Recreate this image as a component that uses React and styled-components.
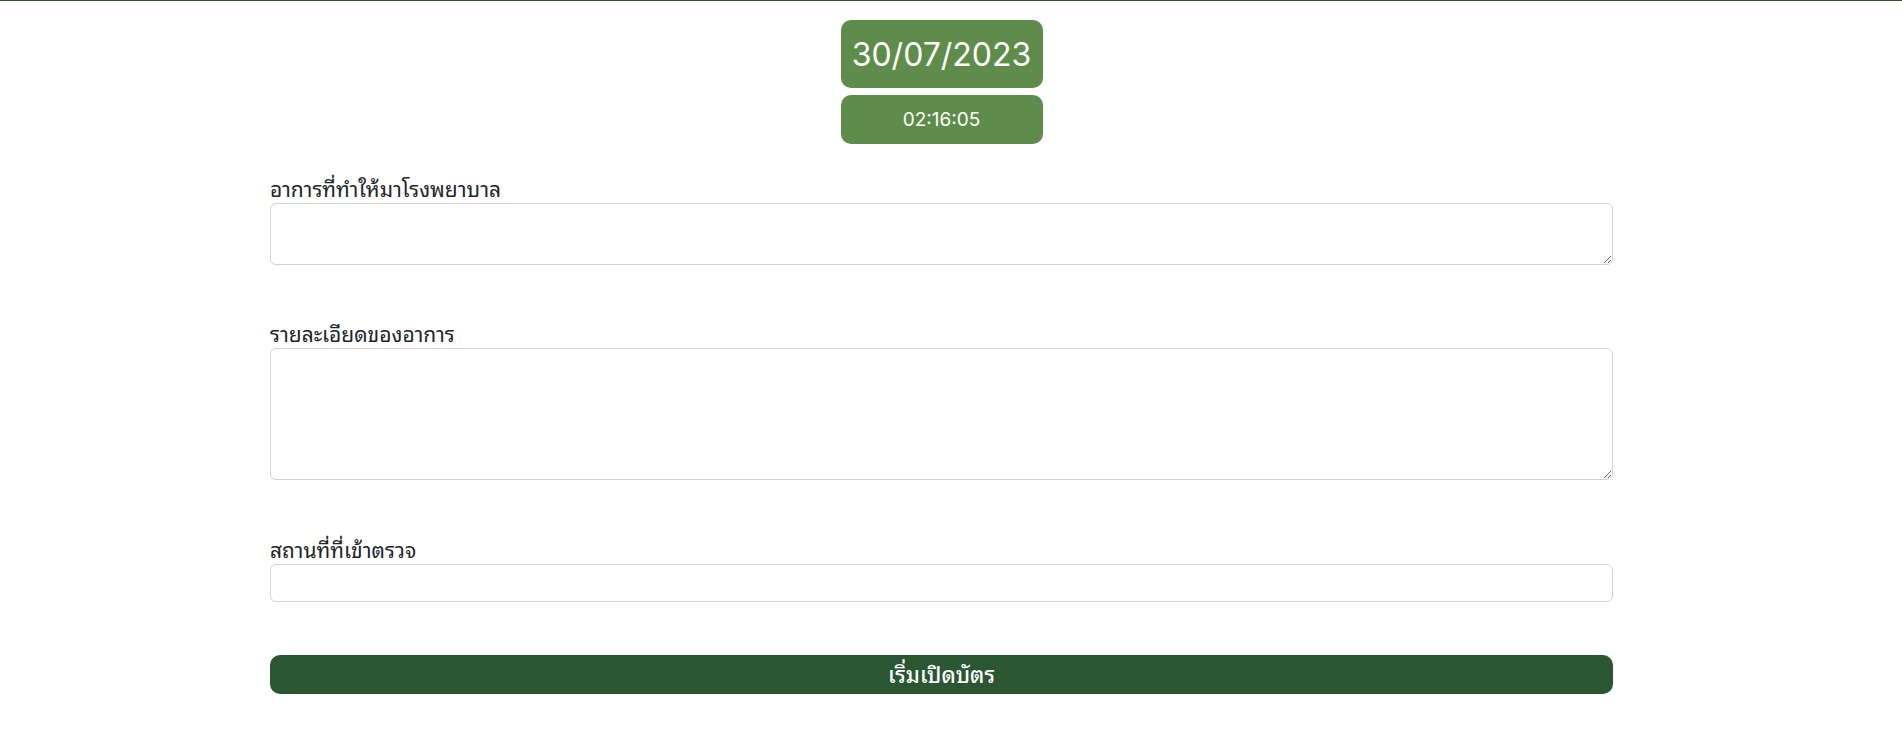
import React from 'react';
import styled, { createGlobalStyle } from 'styled-components';

const GlobalStyle = createGlobalStyle`
  html, body {
    margin: 0;
    padding: 0;
    background: #ffffff;
  }
  body {
    font-family: 'Noto Sans Thai Looped', 'Noto Sans Thai', 'Noto Sans', sans-serif;
    color: #212529;
  }
`;

const Page = styled.div`
  border-top: 1px solid #2a5632;
  min-height: 732px;
  box-sizing: border-box;
`;

const ClockArea = styled.div`
  display: flex;
  flex-direction: column;
  align-items: center;
  gap: 7px;
  padding: 19px 19px 0 0;
`;

const ClockBox = styled.div`
  width: 202px;
  height: ${({ big }) => (big ? '68px' : '49px')};
  background: #5e8c4b;
  border-radius: 10px;
  color: #ffffff;
  display: flex;
  align-items: center;
  justify-content: center;
  font-family: Inter, 'Noto Sans', sans-serif;
  font-size: ${({ big }) => (big ? '32px' : '19px')};
  font-weight: 400;
`;

const Form = styled.form`
  width: 1343px;
  margin: 35px 0 0 270px;
  display: flex;
  flex-direction: column;
`;

const Field = styled.div`
  display: flex;
  flex-direction: column;
  margin-bottom: ${({ gap }) => gap}px;
`;

const Label = styled.label`
  font-size: 21px;
  line-height: 18px;
  padding-bottom: 6px;
  color: #212529;
`;

const TextArea = styled.textarea`
  box-sizing: border-box;
  width: 100%;
  height: ${({ h }) => h}px;
  border: 1px solid #ced4da;
  border-radius: 6px;
  padding: 6px 12px;
  font: inherit;
  font-size: 16px;
  resize: vertical;
  outline: none;
`;

const Input = styled.input`
  box-sizing: border-box;
  width: 100%;
  height: 38px;
  border: 1px solid #ced4da;
  border-radius: 6px;
  padding: 6px 12px;
  font: inherit;
  font-size: 16px;
  outline: none;
`;

const SubmitButton = styled.button`
  width: 100%;
  height: 39px;
  border: none;
  border-radius: 10px;
  background: #2a5632;
  color: #ffffff;
  font-family: 'Noto Sans Thai Looped', 'Noto Sans Thai', 'Noto Sans', sans-serif;
  font-size: 22px;
  line-height: 36px;
  padding: 0 0 3px;
  font-weight: 500;
  cursor: pointer;
`;

export default function App() {
  return (
    <Page>
      <GlobalStyle />
      <ClockArea>
        <ClockBox big>30/07/2023</ClockBox>
        <ClockBox>02:16:05</ClockBox>
      </ClockArea>
      <Form onSubmit={(e) => e.preventDefault()}>
        <Field gap={59}>
          <Label>อาการที่ทำให้มาโรงพยาบาล</Label>
          <TextArea h={62} />
        </Field>
        <Field gap={60}>
          <Label>รายละเอียดของอาการ</Label>
          <TextArea h={132} />
        </Field>
        <Field gap={53}>
          <Label>สถานที่ที่เข้าตรวจ</Label>
          <Input type="text" />
        </Field>
        <SubmitButton type="submit">เริ่มเปิดบัตร</SubmitButton>
      </Form>
    </Page>
  );
}
